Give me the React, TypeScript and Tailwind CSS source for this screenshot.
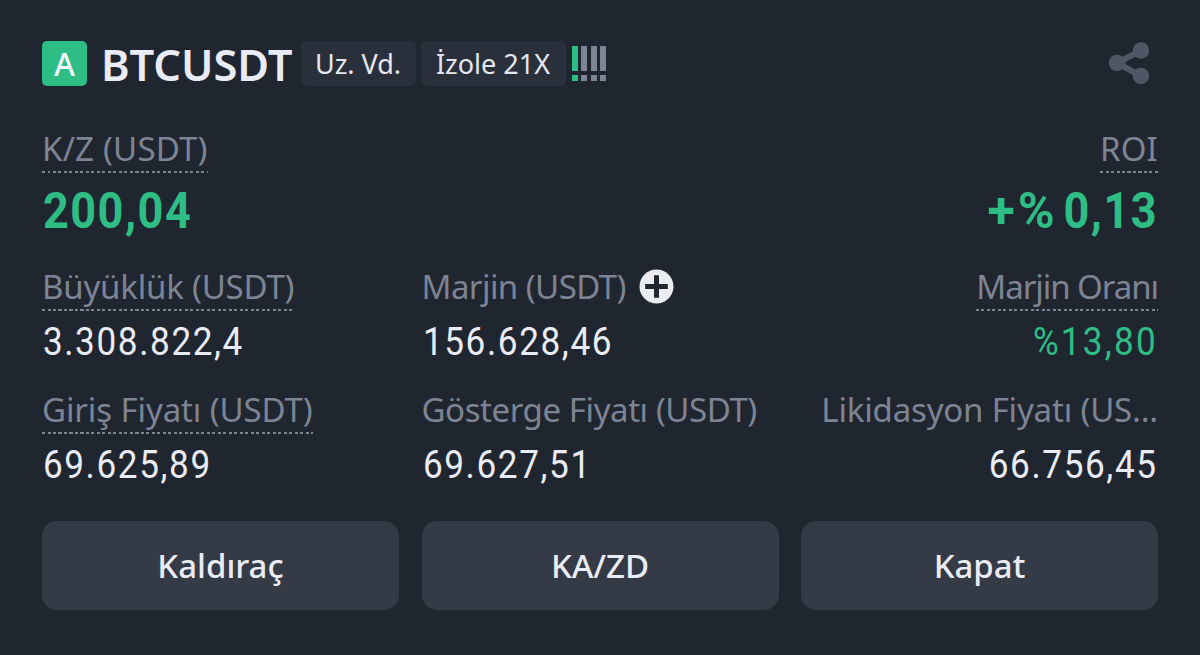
import type { ReactNode } from "react";
import clsx from "clsx";

interface StatProps {
  label: string;
  value: string;
  prefix?: string;
  underline?: boolean;
  alignRight?: boolean;
  labelClass?: string;
  valueClass?: string;
  icon?: ReactNode;
}

function Stat({ label, value, prefix, underline, alignRight, labelClass, valueClass, icon }: StatProps) {
  return (
    <div className={clsx("flex flex-col whitespace-nowrap", alignRight ? "items-end" : "items-start")}>
      <div className="flex h-[44px] items-start">
        <div>
          <p className={clsx("h-9 pt-px text-[33px] leading-9 text-[#7d8493]", labelClass)}>{label}</p>
          {underline && (
            <div className="mt-[5px] h-[2px] bg-[repeating-linear-gradient(90deg,#7d8493_0_3px,transparent_3px_5.5px)]" />
          )}
        </div>
        {icon}
      </div>
      <div className={clsx("flex font-[Roboto,sans-serif]", valueClass)}>
        {prefix && <span className="-mr-[5px] tracking-[3px]">{prefix}</span>}
        <span className={clsx("scale-x-90", alignRight ? "origin-right" : "origin-left pl-px")}>{value}</span>
      </div>
    </div>
  );
}

function PlusIcon() {
  return (
    <svg className="mt-px ml-[13px] size-[35px]" viewBox="0 0 35 35">
      <circle cx="17.5" cy="17.5" r="17" fill="#eaecf2" />
      <path d="M17.5 6.2v22.6M6.2 17.5h22.6" stroke="#202630" strokeWidth="5" />
    </svg>
  );
}

function ShareIcon() {
  return (
    <svg className="h-[44px] w-[42px]" viewBox="0 0 42 44" fill="#4f5766">
      <path d="M33 9.5 9 22l24 13" fill="none" stroke="#4f5766" strokeWidth="6" />
      <circle cx="9" cy="22" r="8.3" />
      <circle cx="33" cy="9.5" r="8.3" />
      <circle cx="33" cy="35" r="8.3" />
    </svg>
  );
}

const bars = ["bg-[#2ebd85]", "bg-[#7d8493]", "bg-[#7d8493]", "bg-[#7d8493]"];

function RiskBars() {
  return (
    <div className="ml-[6px] flex gap-[3.4px]">
      {bars.map((color, i) => (
        <div key={i} className="flex flex-col gap-1">
          <span className={clsx("h-[25px] w-[6px]", color)} />
          <span className={clsx("h-[6px] w-[6px]", color)} />
        </div>
      ))}
    </div>
  );
}

function Tag({ children, className }: { children: ReactNode; className?: string }) {
  return (
    <span
      className={clsx(
        "flex h-[45px] items-center justify-center rounded-[5px] bg-[#29303c] pt-px pr-px text-[27px] whitespace-nowrap text-[#e4e7f0]",
        className
      )}
    >
      {children}
    </span>
  );
}

const smallValue = "mt-[10px] text-[39px] leading-10";
const bigValue = "mt-3 text-[50px] leading-[50px] font-bold tracking-[1.7px] text-[#2ebd85]";

export default function App() {
  return (
    <main className="h-[655px] w-[1200px] overflow-hidden bg-[#202630] px-[42px] pt-[41px] font-['Noto_Sans',sans-serif] text-[#eaecf5]">
      <header className="flex h-[45px] items-center">
        <span className="flex size-[45px] items-center justify-center rounded-[5px] bg-[#2ebd85] text-[32px] font-medium text-[#f3f6f8]">
          A
        </span>
        <h1 className="ml-[14px] w-[199px] pt-[3px] text-[43.5px] leading-none font-semibold tracking-[-0.1px] whitespace-nowrap">
          BTCUSDT
        </h1>
        <Tag className="ml-px w-[115px]">Uz. Vd.</Tag>
        <Tag className="ml-[5px] w-[145px]">İzole 21X</Tag>
        <RiskBars />
        <button className="-mt-px ml-auto pr-[8px]" aria-label="Paylaş">
          <ShareIcon />
        </button>
      </header>

      <section className="mt-[44px] flex justify-between">
        <Stat label="K/Z (USDT)" value="200,04" underline labelClass="tracking-[0.2px]" valueClass={bigValue} />
        <Stat
          label="ROI"
          prefix="+%"
          value="0,13"
          underline
          alignRight
          labelClass="tracking-[0.2px]"
          valueClass={bigValue}
        />
      </section>

      <section className="mt-8 grid grid-cols-3 gap-x-[22.5px]">
        <Stat
          label="Büyüklük (USDT)"
          value="3.308.822,4"
          underline
          labelClass="tracking-[-0.2px]"
          valueClass={clsx("tracking-[1.8px]", smallValue)}
        />
        <Stat
          label="Marjin (USDT)"
          value="156.628,46"
          labelClass="tracking-[-0.55px]"
          icon={<PlusIcon />}
          valueClass={clsx("tracking-[1.8px]", smallValue)}
        />
        <Stat
          label="Marjin Oranı"
          value="%13,80"
          underline
          alignRight
          labelClass="tracking-[-1.05px]"
          valueClass={clsx("tracking-[2.5px] text-[#2ebd85]", smallValue)}
        />
      </section>

      <section className="mt-[29px] grid grid-cols-3 gap-x-[22.5px]">
        <Stat
          label="Giriş Fiyatı (USDT)"
          value="69.625,89"
          underline
          labelClass="tracking-[-0.1px]"
          valueClass={clsx("tracking-[1.8px]", smallValue)}
        />
        <Stat
          label="Gösterge Fiyatı (USDT)"
          value="69.627,51"
          labelClass="tracking-[-0.42px]"
          valueClass={clsx("tracking-[1.8px]", smallValue)}
        />
        <Stat
          label="Likidasyon Fiyatı (US..."
          value="66.756,45"
          alignRight
          labelClass="tracking-[-0.18px]"
          valueClass={clsx("tracking-[1.8px]", smallValue)}
        />
      </section>

      <div className="mt-[36px] grid grid-cols-3 gap-x-[22.5px]">
        {["Kaldıraç", "KA/ZD", "Kapat"].map((label) => (
          <button key={label} className="h-[89px] rounded-[15px] bg-[#343a46] pt-px text-[33px] font-medium">
            {label}
          </button>
        ))}
      </div>
    </main>
  );
}
